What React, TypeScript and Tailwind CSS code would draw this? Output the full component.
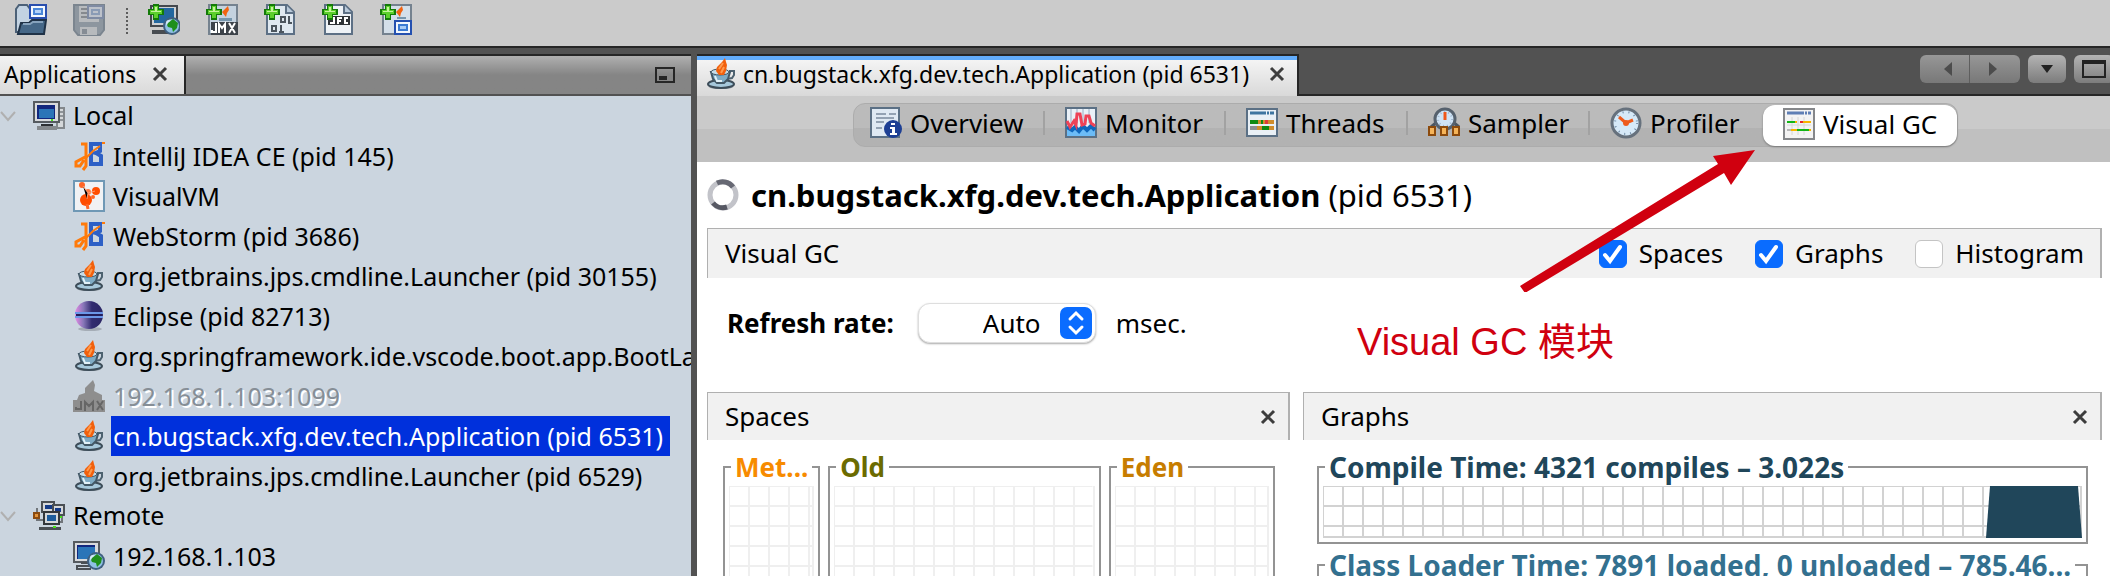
import React from "react";

type TreeNode = {
  label: string;
  icon: React.ReactNode;
  selected?: boolean;
  disabled?: boolean;
};

const PlusBadge = () => (
  <g>
    <path d="M5 0h6v5h5v6h-5v5H5v-5H0V5h5z" fill="#137a08" />
    <path d="M6 2h4v4h4v4h-4v4H6v-4H2V6h4z" fill="#5ccf2c" />
    <path d="M7 3h2v4h4v1H3V7h4z" fill="#c4f59a" />
  </g>
);

const Globe = ({ x, y }: { x: number; y: number }) => (
  <g transform={`translate(${x} ${y})`}>
    <circle cx="8" cy="9" r="9" fill="#3f5f80" />
    <circle cx="8" cy="9" r="7" fill="#8fc0e4" />
    <circle cx="5" cy="6" r="3" fill="#d3e9f8" />
    <path d="M4 6l5-4 5 4-1 5-4 4-1-4-4-1-1-2z" fill="#1f8f1c" />
  </g>
);

const Icon = ({ children }: { children: React.ReactNode }) => (
  <svg viewBox="0 0 32 32" className="size-8 shrink-0" aria-hidden="true">
    {children}
  </svg>
);

const OpenIcon = () => (
  <Icon>
    <path d="M1 28V5l3-4h8l3 4v8h14v15z" fill="#c3d3e2" stroke="#4c6177" strokeWidth="2" />
    <path d="M6 19h8l3-3h14l-2 14H3z" fill="#456787" stroke="#1f3247" strokeWidth="2" />
    <path d="M8 20h7l3-2h10" fill="none" stroke="#86a2bc" strokeWidth="2" />
    <rect x="15" y="1" width="16" height="13" fill="#f5f9fe" stroke="#2a4fae" strokeWidth="2" />
    <rect x="19" y="5" width="8" height="5" fill="#b4d2f8" stroke="#4b87d8" strokeWidth="2" />
  </Icon>
);

const SaveIcon = () => (
  <Icon>
    <path d="M1 1h30v25l-4 5H5l-4-5z" fill="#8d969f" stroke="#7b858f" strokeWidth="2" />
    <rect x="6" y="2" width="20" height="16" fill="#b8bbbe" />
    <path d="M8 5h6M8 9h6M8 13h8" stroke="#85898e" strokeWidth="2" />
    <rect x="15" y="2" width="15" height="12" fill="#bcc1ca" stroke="#7f8ba3" strokeWidth="2" />
    <rect x="19" y="6" width="7" height="4" fill="none" stroke="#8a9bb5" strokeWidth="2" />
    <rect x="7" y="23" width="17" height="8" fill="#b7babd" />
    <rect x="9" y="25" width="5" height="5" fill="#858c94" />
  </Icon>
);

const AddRemoteIcon = () => (
  <Icon>
    <rect x="3" y="2" width="26" height="20" fill="#cdd0d3" stroke="#44484e" strokeWidth="2" />
    <rect x="6" y="4" width="20" height="15" fill="#23679f" />
    <path d="M4 26h16v4H4z" fill="#484c51" />
    <Globe x={16} y={13} />
    <PlusBadge />
  </Icon>
);

const AddJmxIcon = () => (
  <Icon>
    <rect x="3" y="1" width="28" height="29" fill="#c4d2df" stroke="#75828f" strokeWidth="2" />
    <path d="M22 2l-6 6 4 5 1-4 2-3z" fill="#f26411" />
    <path d="M13 14h13v3H13z" fill="#7696ad" />
    <rect x="5" y="18" width="27" height="13" fill="#3d434a" />
    <path
      d="M10 19v9H6v-2M13 29v-9l3 4 3-4v9M23 19l6 10M29 19l-6 10"
      fill="none"
      stroke="#ffffff"
      strokeWidth="2"
    />
    <PlusBadge />
  </Icon>
);

const AddDumpIcon = () => (
  <Icon>
    <path d="M3 1h20l7 7v22H3z" fill="#dfe8f0" stroke="#5d7085" strokeWidth="2" />
    <path d="M22 1v8h8" fill="#b9cadb" stroke="#5d7085" strokeWidth="2" />
    <path
      d="M17 13h4v5h-4zM25 12v7M8 22h4v5H8zM17 21v7"
      fill="none"
      stroke="#4c555e"
      strokeWidth="2"
    />
    <path d="M24 13h2M24 19h4M16 22h2M15 28h5" stroke="#4c555e" strokeWidth="2" />
    <PlusBadge />
  </Icon>
);

const AddJfcIcon = () => (
  <Icon>
    <path d="M3 1h20l7 7v22H3z" fill="#eef2f6" stroke="#5d7085" strokeWidth="2" />
    <path d="M22 1v8h8" fill="#b9cadb" stroke="#5d7085" strokeWidth="2" />
    <path d="M6 12h22v9H6z" fill="#2f3337" />
    <path
      d="M12 13v6H8M16 20v-6h4M16 17h3M26 14h-3v5h3"
      fill="none"
      stroke="#ffffff"
      strokeWidth="2"
    />
    <PlusBadge />
  </Icon>
);

const AddSnapshotIcon = () => (
  <Icon>
    <rect x="3" y="1" width="28" height="29" fill="#d4dfe9" stroke="#75828f" strokeWidth="2" />
    <path d="M22 2l-6 6 4 5 1-4 2-3z" fill="#f26411" />
    <path d="M17 13h9v2h-9z" fill="#7696ad" />
    <rect x="15" y="17" width="16" height="13" fill="#f2f7fd" stroke="#2450b0" strokeWidth="2" />
    <rect x="19" y="21" width="8" height="5" fill="#a8ccf5" stroke="#3b7ad2" strokeWidth="2" />
    <PlusBadge />
  </Icon>
);

const JavaIcon = () => (
  <Icon>
    <ellipse cx="16" cy="29" rx="12" ry="2" fill="#8e979e" />
    <ellipse cx="16" cy="26" rx="13" ry="4" fill="#a6c8db" stroke="#3d4d59" strokeWidth="2" />
    <path d="M24 13h5v4l-2 3-5 1" fill="none" stroke="#4d6270" strokeWidth="2" />
    <path d="M6 14l2 7 4 4h7l4-4 2-7z" fill="#7fabc4" stroke="#435866" strokeWidth="2" />
    <ellipse cx="15" cy="14" rx="9" ry="3" fill="#c6dce8" stroke="#435866" strokeWidth="1" />
    <path d="M20 0l-3 4-5 5-1 4 3 4h5l2-4 1-6-1-3z" fill="#f2600c" />
    <path d="M18 5l-4 6M19 9l-3 6" stroke="#ff9a4d" strokeWidth="2" />
    <path d="M10 18l2 5h5" fill="none" stroke="#e2f1f8" strokeWidth="2" />
  </Icon>
);

const JetBrainsIcon = () => (
  <Icon>
    <path
      d="M18 4h9v7l-4 2 5 3v8H18z"
      fill="none"
      stroke="#2d60c6"
      strokeWidth="4"
    />
    <path d="M18 13h6" stroke="#2d60c6" strokeWidth="3" />
    <path
      d="M8 4h5v22l-3 4M12 17l-9 5v4h4l4-6"
      fill="none"
      stroke="#ff7a0a"
      strokeWidth="3"
    />
    <path d="M12 19l8-8 7-5" fill="none" stroke="#ff7a0a" strokeWidth="2" />
    <rect x="29" y="2" width="3" height="2" fill="#ff7a0a" />
  </Icon>
);

const VisualVmIcon = () => (
  <Icon>
    <rect x="1" y="1" width="30" height="30" fill="#f1f2f4" stroke="#6f98b5" strokeWidth="2" />
    <circle cx="13" cy="20" r="6" fill="#ff4d00" />
    <circle cx="23" cy="11" r="4" fill="#ff4d00" />
    <circle cx="15" cy="12" r="3" fill="#ff7a42" />
    <circle cx="9" cy="5" r="3" fill="#ff6526" />
    <circle cx="20" cy="17" r="2" fill="#ff6526" />
    <path d="M10 6l5 7-1 6M15 13l7-2" stroke="#ff9b70" strokeWidth="1" />
    <path d="M14 24l1 5" stroke="#ff6526" strokeWidth="3" />
  </Icon>
);

const EclipseIcon = () => (
  <Icon>
    <defs>
      <linearGradient id="eclipse" x1="0" y1="0" x2="1" y2="0">
        <stop offset="0" stopColor="#e58be6" />
        <stop offset="0.3" stopColor="#8777b8" />
        <stop offset="0.6" stopColor="#322c70" />
        <stop offset="1" stopColor="#2b2664" />
      </linearGradient>
    </defs>
    <ellipse cx="17" cy="29" rx="12" ry="2" fill="#a5adb6" />
    <circle cx="16" cy="15" r="14" fill="url(#eclipse)" />
    <path d="M2 13h28M2 17h28" stroke="#6c97e8" strokeWidth="2" />
    <path d="M3 15h26" stroke="#241f5c" strokeWidth="2" />
  </Icon>
);

const JmxOffIcon = () => (
  <Icon>
    <path d="M20 0l-8 8v5l-6 2-2 5H0v12h32V20h-3v-5l-8-4 1-6z" fill="#8e8e8e" />
    <path
      d="M8 21v8H3v-2M12 31v-9l4 4 4-4v9M24 21l6 9M30 21l-6 9"
      fill="none"
      stroke="#666666"
      strokeWidth="2"
    />
  </Icon>
);

const LocalIcon = () => (
  <Icon>
    <path d="M24 8h7v20H24z" fill="#d5d8da" stroke="#83888c" strokeWidth="2" />
    <path d="M26 12h4M26 16h4M26 20h4" stroke="#8f9498" strokeWidth="2" />
    <rect x="1" y="2" width="25" height="20" fill="#d9dbdd" stroke="#565b60" strokeWidth="2" />
    <rect x="4" y="5" width="18" height="14" fill="#12277e" />
    <rect x="6" y="9" width="15" height="9" fill="#2b75b8" />
    <rect x="18" y="19" width="2" height="2" fill="#47e01a" />
    <path d="M8 24h12v2H8z" fill="#2d3034" />
    <path d="M4 26h20v4H4z" fill="#85898d" />
  </Icon>
);

const RemoteGroupIcon = () => (
  <Icon>
    <rect x="9" y="2" width="12" height="10" fill="#d5d7d9" stroke="#4a4f54" strokeWidth="2" />
    <rect x="12" y="5" width="7" height="4" fill="#143a86" />
    <rect x="20" y="5" width="11" height="10" fill="#d5d7d9" stroke="#4a4f54" strokeWidth="2" />
    <rect x="22" y="8" width="6" height="4" fill="#143a86" />
    <path d="M4 8v12h6M29 16v6h-4" fill="none" stroke="#70757a" strokeWidth="2" />
    <rect x="1" y="13" width="5" height="5" fill="#e39338" stroke="#8a4b10" strokeWidth="2" />
    <rect x="11" y="12" width="15" height="12" fill="#d5d7d9" stroke="#33373b" strokeWidth="2" />
    <rect x="14" y="15" width="9" height="6" fill="#1d5c9c" />
    <path d="M6 27h22v3H6z" fill="#4a4f54" />
    <rect x="20" y="26" width="3" height="2" fill="#47e01a" />
    <rect x="27" y="16" width="2" height="2" fill="#47e01a" />
  </Icon>
);

const RemoteHostIcon = () => (
  <Icon>
    <rect x="1" y="2" width="25" height="20" fill="#d9dbdd" stroke="#565b60" strokeWidth="2" />
    <rect x="4" y="5" width="18" height="14" fill="#12277e" />
    <rect x="5" y="7" width="17" height="12" fill="#2b75b8" />
    <path d="M8 23h8v3H4v3h14" fill="none" stroke="#4a4f54" strokeWidth="2" />
    <Globe x={15} y={12} />
  </Icon>
);

const OverviewIcon = () => (
  <Icon>
    <rect x="1" y="1" width="28" height="29" fill="#dfe9f3" stroke="#5b7085" strokeWidth="2" />
    <path d="M6 7h10M19 7h7M6 11h18M6 15h8M6 21h6" stroke="#93a2b3" strokeWidth="2" />
    <circle cx="23" cy="22" r="9" fill="#1d3f94" />
    <path d="M21 16h4v2h-4zM20 20h5v6h2v2h-7v-2h2v-4h-2z" fill="#ffffff" />
  </Icon>
);

const MonitorIcon = () => (
  <Icon>
    <rect x="1" y="1" width="30" height="29" fill="#eaf1f8" stroke="#5b7085" strokeWidth="2" />
    <path d="M6 2v14M12 2v14M18 2v14M24 2v14" stroke="#c2d0de" strokeWidth="2" />
    <path d="M2 19l5 3 3-3 4 4 4-5 4 4 4-4 4 4v7H2z" fill="#6cbcf7" />
    <path d="M2 20l5 3 3-3 4 4 4-5 4 4 4-4 4 4" fill="none" stroke="#0f67bd" strokeWidth="4" />
    <path
      d="M2 14l3 6 4-6 2 4 1-11h3l2 11 3-1 1-8h3l2 7 4 3"
      fill="none"
      stroke="#ee4257"
      strokeWidth="3"
    />
  </Icon>
);

const ThreadsIcon = () => (
  <Icon>
    <rect x="1" y="2" width="30" height="27" fill="#e9f0f6" stroke="#5b7085" strokeWidth="2" />
    <path d="M4 6h24" stroke="#3e75a0" strokeWidth="3" strokeDasharray="16 1 2 1" />
    <path d="M4 15h13" stroke="#0f8a12" strokeWidth="4" />
    <path d="M12 15h3M17 15h11" stroke="#cf8d2c" strokeWidth="4" />
    <path d="M19 15h3" stroke="#dd3a3a" strokeWidth="4" />
    <path d="M4 21h7" stroke="#8c8f92" strokeWidth="4" />
    <path d="M11 21h17" stroke="#cf8d2c" strokeWidth="4" />
    <path d="M16 21h7" stroke="#0f8a12" strokeWidth="4" />
  </Icon>
);

const SamplerIcon = () => (
  <Icon>
    <path d="M3 20l6-5M31 20l-6-5" stroke="#4c5660" strokeWidth="3" />
    <circle cx="17" cy="12" r="10" fill="#cfe3f5" stroke="#56616d" strokeWidth="3" />
    <circle cx="17" cy="12" r="7" fill="none" stroke="#9fb6cd" strokeWidth="2" strokeDasharray="1 3" />
    <path d="M17 5v8" stroke="#f0571a" strokeWidth="3" />
    <g fill="#f6b458" stroke="#8c4a0c" strokeWidth="2">
      <rect x="1" y="20" width="6" height="8" />
      <rect x="13" y="20" width="6" height="8" />
      <rect x="25" y="20" width="6" height="8" />
    </g>
  </Icon>
);

const ProfilerIcon = () => (
  <Icon>
    <circle cx="16" cy="16" r="14" fill="#d6e9f8" stroke="#66717d" strokeWidth="3" />
    <circle cx="16" cy="16" r="11" fill="none" stroke="#6e8aa5" strokeWidth="2" strokeDasharray="1 5" />
    <path d="M9 10l7 6 7-3" fill="none" stroke="#ee5b1d" strokeWidth="3" />
    <circle cx="16" cy="16" r="3" fill="#ee5b1d" />
  </Icon>
);

const VisualGcIcon = () => (
  <Icon>
    <rect x="1" y="1" width="30" height="30" fill="#f3f3f3" stroke="#85878a" strokeWidth="2" />
    <path d="M4 5h24" stroke="#5f7fb5" strokeWidth="3" strokeDasharray="17 1 2 1" />
    <path d="M9 9v18M15 9v18M21 9v18M4 17h24" stroke="#d6d6d6" strokeWidth="1" />
    <path d="M4 14h10" stroke="#12b516" strokeWidth="2" />
    <path d="M12 14h2M20 14h8" stroke="#f6b400" strokeWidth="2" />
    <path d="M17 14h3" stroke="#e8282b" strokeWidth="2" />
    <path d="M4 22h4" stroke="#b6b6b6" strokeWidth="2" />
    <path d="M8 22h20" stroke="#f6b400" strokeWidth="2" />
    <path d="M14 22h12" stroke="#12b516" strokeWidth="2" />
  </Icon>
);

const CloseIcon = () => (
  <svg viewBox="0 0 16 16" className="size-4" aria-hidden="true">
    <path d="M2 2l12 12M14 2L2 14" stroke="#3d3d3d" strokeWidth="3" />
  </svg>
);

const SpinnerIcon = () => (
  <Icon>
    <circle cx="16" cy="16" r="13" fill="none" stroke="#c2c3c9" strokeWidth="5" />
    <path d="M10 4a13 13 0 0 1 16 4" fill="none" stroke="#666873" strokeWidth="5" />
    <path d="M20 28a13 13 0 0 1-14-4" fill="none" stroke="#565863" strokeWidth="5" />
  </Icon>
);

const localNodes: TreeNode[] = [
  { label: "IntelliJ IDEA CE (pid 145)", icon: <JetBrainsIcon /> },
  { label: "VisualVM", icon: <VisualVmIcon /> },
  { label: "WebStorm (pid 3686)", icon: <JetBrainsIcon /> },
  { label: "org.jetbrains.jps.cmdline.Launcher (pid 30155)", icon: <JavaIcon /> },
  { label: "Eclipse (pid 82713)", icon: <EclipseIcon /> },
  { label: "org.springframework.ide.vscode.boot.app.BootLan", icon: <JavaIcon /> },
  { label: "192.168.1.103:1099", icon: <JmxOffIcon />, disabled: true },
  { label: "cn.bugstack.xfg.dev.tech.Application (pid 6531)", icon: <JavaIcon />, selected: true },
  { label: "org.jetbrains.jps.cmdline.Launcher (pid 6529)", icon: <JavaIcon /> },
];

const tools = [
  { label: "Load snapshot", icon: <OpenIcon /> },
  { label: "Save snapshot", icon: <SaveIcon /> },
  { label: "Add remote host", icon: <AddRemoteIcon /> },
  { label: "Add JMX connection", icon: <AddJmxIcon /> },
  { label: "Add VM coredump", icon: <AddDumpIcon /> },
  { label: "Add JFR snapshot", icon: <AddJfcIcon /> },
  { label: "Add application snapshot", icon: <AddSnapshotIcon /> },
];

const views = [
  { label: "Overview", icon: <OverviewIcon />, size: "w-[191px] pl-4" },
  { label: "Monitor", icon: <MonitorIcon />, size: "w-[181px] pl-5" },
  { label: "Threads", icon: <ThreadsIcon />, size: "w-[182px] pl-5" },
  { label: "Sampler", icon: <SamplerIcon />, size: "w-[182px] pl-5" },
  { label: "Profiler", icon: <ProfilerIcon />, size: "w-[173px] pl-5" },
];

const GroupRow = ({ label, icon }: { label: string; icon: React.ReactNode }) => (
  <div className="flex h-10 items-center">
    <svg viewBox="0 0 16 12" className="mr-[17px] h-3 w-4 shrink-0" aria-hidden="true">
      <path d="M1 2l7 8 7-8" fill="none" stroke="#b0b0b0" strokeWidth="2" />
    </svg>
    {icon}
    <span className="ml-1.5 px-0.5">{label}</span>
  </div>
);

const NodeRow = ({ label, icon, selected, disabled }: TreeNode) => (
  <li className="flex h-10 items-center pl-[73px]">
    {icon}
    <span
      className={
        selected
          ? "ml-1.5 h-10 bg-[#0030dc] pr-[7px] pl-0.5 leading-10 whitespace-nowrap text-white"
          : disabled
            ? "ml-1.5 px-0.5 leading-10 whitespace-nowrap text-[#868e96] [text-shadow:2px_2px_0_#ffffff]"
            : "ml-1.5 px-0.5 leading-10 whitespace-nowrap"
      }
    >
      {label}
    </span>
  </li>
);

const Option = ({ label, checked }: { label: string; checked: boolean }) => (
  <label className="flex items-center gap-3">
    <span className="relative flex size-7">
      <input
        type="checkbox"
        defaultChecked={checked}
        className="peer size-7 appearance-none rounded-md border border-[#c4c4c4] bg-white checked:border-[#0a6cff] checked:bg-[#0a6cff]"
      />
      <svg
        viewBox="0 0 28 28"
        className="pointer-events-none absolute inset-0 hidden size-7 peer-checked:block"
        aria-hidden="true"
      >
        <path d="M6 15l5 6L21 7" fill="none" stroke="#ffffff" strokeWidth="4" strokeLinecap="round" />
      </svg>
    </span>
    {label}
  </label>
);

const PanelHeader = ({ title }: { title: string }) => (
  <div className="flex h-12 items-center justify-between border-t border-r-2 border-l border-[#b0b0b0] bg-[#f1f1f1] pr-3 pl-[17px]">
    <h2>{title}</h2>
    <button aria-label={`Close ${title}`}>
      <CloseIcon />
    </button>
  </div>
);

const Grid = ({ id, color, className }: { id: string; color: string; className: string }) => (
  <svg className={className} aria-hidden="true">
    <defs>
      <pattern id={id} width="20" height="20" patternUnits="userSpaceOnUse">
        <path d="M0 20h20M20 0v20M0 0h20M0 0v20" stroke={color} strokeWidth="2" />
      </pattern>
    </defs>
    <rect width="100%" height="100%" fill={`url(#${id})`} />
  </svg>
);

const Space = ({ title, color, id }: { title: string; color: string; id: string }) => (
  <fieldset className="h-80 min-w-0 border-2 border-[#939393] px-1">
    <legend className={`ml-0.5 px-1 leading-[34px] font-bold ${color}`}>{title}</legend>
    <Grid id={id} color="#efefef" className="mt-0.5 h-72 w-full border-r-2 border-[#efefef]" />
  </fieldset>
);

const App = () => (
  <div className="flex h-screen flex-col overflow-hidden bg-white font-['Noto_Sans',sans-serif] text-[25px] text-black">
    {/* Toolbar */}
    <div className="flex h-12 shrink-0 items-start border-b-2 border-[#262626] bg-[#cbcbcb] pt-1 pl-[15px]">
      {tools.map((tool, index) => (
        <React.Fragment key={tool.label}>
          <button aria-label={tool.label} className="mr-[26px] size-8">
            {tool.icon}
          </button>
          {index === 1 && (
            <div className="mt-1 mr-[20px] -ml-[5px] h-[26px] border-l-2 border-dotted border-[#5c5c5c]" />
          )}
        </React.Fragment>
      ))}
    </div>

    <div className="flex min-h-0 flex-1 bg-[#525252]">
      {/* Applications */}
      <aside className="mr-1.5 flex w-[691px] shrink-0 flex-col pt-1.5">
        <div className="flex h-[42px] shrink-0 items-center justify-between border-t-2 border-b-2 border-t-[#262626] border-b-[#525252] bg-linear-to-b from-[#b0b0b0] to-[#858585] to-50% pr-4">
          <div className="flex h-full items-center border-r-2 border-[#262626] bg-linear-to-b from-[#f2f2f2] to-[#dadada] pr-4 pb-0.5 pl-1 text-[23px]">
            Applications
            <button aria-label="Close Applications" className="ml-4">
              <CloseIcon />
            </button>
          </div>
          <button aria-label="Minimize" className="h-4 w-5 border-2 border-[#262626] px-0.5 pt-1.5">
            <span className="block h-1 w-2 bg-[#262626]" />
          </button>
        </div>
        <div className="flex-1 overflow-hidden bg-[#cbd5df]">
          <GroupRow label="Local" icon={<LocalIcon />} />
          <ul>
            {localNodes.map((node) => (
              <NodeRow key={node.label} {...node} />
            ))}
          </ul>
          <GroupRow label="Remote" icon={<RemoteGroupIcon />} />
          <ul>
            <NodeRow label="192.168.1.103" icon={<RemoteHostIcon />} />
          </ul>
        </div>
      </aside>

      <main className="flex min-w-0 flex-1 flex-col">
        {/* Document tabs */}
        <div className="flex h-12 shrink-0 items-end justify-between">
          <div className="flex h-[42px] items-center border-t-2 border-r-2 border-[#262626]">
            <div className="flex h-10 items-center border-t-4 border-[#62acfb] bg-linear-to-b from-[#f4f4f4] to-[#d9d9d9] pr-3 pb-2 pl-2 text-[23px]">
              <JavaIcon />
              <span className="ml-1.5">cn.bugstack.xfg.dev.tech.Application (pid 6531)</span>
              <button aria-label="Close tab" className="ml-5">
                <CloseIcon />
              </button>
            </div>
          </div>
          <div className="flex h-full flex-1 justify-end overflow-hidden border-b-2 border-[#262626] pt-[7px]">
            <button
              aria-label="Previous"
              className="flex h-7 w-[50px] items-center justify-center rounded-l-md border-r border-[#5e5e5e] bg-linear-to-b from-[#979797] to-[#787878] pl-1.5"
            >
              <svg viewBox="0 0 8 14" className="h-3.5 w-2">
                <path d="M8 0v14L0 7z" fill="#4c4c4c" />
              </svg>
            </button>
            <button
              aria-label="Next"
              className="mr-2 flex h-7 w-[50px] items-center justify-center rounded-r-md bg-linear-to-b from-[#979797] to-[#787878] pr-1"
            >
              <svg viewBox="0 0 8 14" className="h-3.5 w-2">
                <path d="M0 0v14l8-7z" fill="#4c4c4c" />
              </svg>
            </button>
            <button
              aria-label="Show opened documents"
              className="mr-2 flex h-7 w-[38px] items-center justify-center rounded-md bg-linear-to-b from-[#b4b4b4] to-[#7c7c7c]"
            >
              <svg viewBox="0 0 12 8" className="h-2 w-3">
                <path d="M0 0h12L6 8z" fill="#222222" />
              </svg>
            </button>
            <button
              aria-label="Maximize"
              className="-mr-1 flex h-7 w-10 items-center justify-center rounded-md bg-linear-to-b from-[#b4b4b4] to-[#7c7c7c]"
            >
              <span className="h-[18px] w-6 border-2 border-t-4 border-[#222222]" />
            </button>
          </div>
        </div>

        {/* View switcher */}
        <nav className="flex h-[66px] shrink-0 justify-center bg-linear-to-b from-[#cacaca] from-50% to-[#c0c0c0] to-50% pt-[7px]">
          <div className="ml-1 flex h-11 items-center rounded-xl border border-[#acacac] bg-linear-to-b from-[#bbbbbb] from-58% to-[#b2b2b2] to-58% text-[26px]">
            {views.map((view) => (
              <button key={view.label} className={`flex h-full items-center pb-1 ${view.size}`}>
                {view.icon}
                <span className="ml-2 flex-1 text-left">{view.label}</span>
                {view.label !== "Profiler" && <span className="h-6 border-l-2 border-[#a2a2a2]" />}
              </button>
            ))}
            <button className="flex h-[41px] w-[194px] items-center rounded-xl bg-white pb-0.5 pl-5 shadow-[0_1px_2px_#777777]">
              <VisualGcIcon />
              <span className="ml-2">Visual GC</span>
            </button>
          </div>
        </nav>

        <div className="relative min-h-0 flex-1 overflow-hidden bg-white pr-2 pl-2.5 text-[26px]">
          <div className="flex h-[66px] items-center gap-3">
            <SpinnerIcon />
            <h1 className="text-[31px] whitespace-nowrap">
              <b>cn.bugstack.xfg.dev.tech.Application</b> (pid 6531)
            </h1>
          </div>

          <div className="flex h-[50px] items-center justify-between border-t border-r-2 border-l border-[#b0b0b0] bg-[#f1f1f1] pr-4 pl-[17px]">
            <h2>Visual GC</h2>
            <div className="flex gap-8">
              <Option label="Spaces" checked />
              <Option label="Graphs" checked />
              <Option label="Histogram" checked={false} />
            </div>
          </div>

          <div className="flex h-[114px] items-center pb-6 pl-5">
            <label htmlFor="rate" className="font-bold">
              Refresh rate:
            </label>
            <span className="relative mr-5 ml-6 flex">
              <select
                id="rate"
                className="h-10 w-[178px] appearance-none rounded-xl border border-[#dedede] bg-white pl-16 shadow-[0_1px_2px_#aaaaaa]"
              >
                <option>Auto</option>
              </select>
              <svg
                viewBox="0 0 32 32"
                className="pointer-events-none absolute top-1 right-1 size-8"
                aria-hidden="true"
              >
                <rect width="32" height="32" rx="7" fill="#0a6cff" />
                <path
                  d="M10 12l6-6 6 6M10 20l6 6 6-6"
                  fill="none"
                  stroke="#ffffff"
                  strokeWidth="3"
                  strokeLinecap="round"
                />
              </svg>
            </span>
            <span>msec.</span>
          </div>

          <div className="grid grid-cols-[583fr_799fr] gap-[13px]">
            <section>
              <PanelHeader title="Spaces" />
              <div className="grid grid-cols-[97fr_272fr_166fr] gap-2 pt-2.5 pr-[15px] pl-4">
                <Space id="meta-grid" title="Met..." color="text-[#f78b00]" />
                <Space id="old-grid" title="Old" color="text-[#6b6b00]" />
                <Space id="eden-grid" title="Eden" color="text-[#c77d00]" />
              </div>
            </section>
            <section>
              <PanelHeader title="Graphs" />
              <div className="px-3.5 pt-2.5">
                <fieldset className="border-2 border-[#939393] px-1 pb-1">
                  <legend className="ml-0.5 px-1 text-[28px] leading-[34px] font-bold text-[#20465a]">
                    Compile Time: 4321 compiles – 3.022s
                  </legend>
                  <div className="relative mt-0.5">
                    <Grid id="compile-grid" color="#d2d2d2" className="h-[52px] w-full border-r-2 border-b-2 border-[#d2d2d2]" />
                    <svg
                      viewBox="0 0 96 52"
                      className="absolute top-0 right-0 h-[52px] w-24"
                      aria-hidden="true"
                    >
                      <path d="M4 0h88l4 52H0z" fill="#20465a" />
                    </svg>
                  </div>
                </fieldset>
                <fieldset className="mt-1 min-w-0 border-2 border-[#939393] px-1 pb-1">
                  <legend className="ml-0.5 px-1 text-[28px] leading-[34px] font-bold whitespace-nowrap text-[#33708f]">
                    Class Loader Time: 7891 loaded, 0 unloaded – 785.46...
                  </legend>
                  <Grid id="loader-grid" color="#d2d2d2" className="mt-0.5 h-[52px] w-full" />
                </fieldset>
              </div>
            </section>
          </div>

          {/* Callout over the panel */}
          <p className="absolute top-[152px] left-[660px] font-['Liberation_Sans','Noto_Sans_CJK_SC',sans-serif] text-[38px] text-[#d0000f]">
            Visual GC 模块
          </p>
        </div>
      </main>
    </div>

    <svg
      viewBox="0 0 240 144"
      className="pointer-events-none absolute top-[148px] left-[1518px] h-36 w-60"
      aria-hidden="true"
    >
      <path d="M2 138l198-122-5-8 42-6-24 35-7-12L7 145z" fill="#d0000f" />
    </svg>
  </div>
);

export default App;
